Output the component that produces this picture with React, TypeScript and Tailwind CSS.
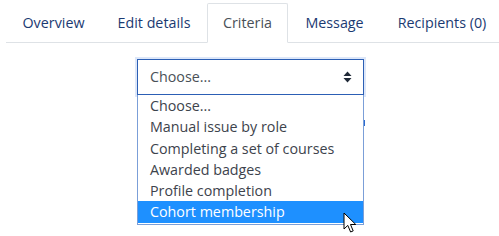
import React from 'react';

const tabs = [
  { label: 'Overview', w: 'w-[95px]' },
  { label: 'Edit details', w: 'w-[106px]' },
  { label: 'Criteria', w: 'w-[81px]', active: true },
  { label: 'Message', w: 'w-[93px]' },
  { label: 'Recipients (0)', w: 'w-[122px]' },
];

const options = [
  'Choose...',
  'Manual issue by role',
  'Completing a set of courses',
  'Awarded badges',
  'Profile completion',
  'Cohort membership',
];

export default function App() {
  return (
    <div className="w-[499px] h-[236px] overflow-hidden bg-white font-['Open_Sans','Noto_Sans',sans-serif] text-[14.3px]">
      {/* Tabs */}
      <div className="pt-[3px] pl-[6px]">
        <ul className="flex border-b border-[#dee2e6] w-[493px]">
          {tabs.map((t) => (
            <li
              key={t.label}
              className={`${t.w} shrink-0 h-[40px] -mb-px flex items-center justify-center border rounded-t-[2px] whitespace-nowrap ${
                t.active
                  ? 'border-[#dee2e6] border-b-white bg-white text-[#495057]'
                  : 'border-transparent text-[#1b3a72]'
              }`}
            >
              {t.label}
            </li>
          ))}
        </ul>
      </div>

      {/* Select with open listbox */}
      <div className="relative pl-[137px] pt-[16px]">
        <div className="w-[227px] h-[36px] border border-[#2c5fb5] shadow-[0_0_0_2px_rgba(120,160,230,0.25)] flex items-center justify-between pl-[12px] pr-[10px] text-[#495057]">
          <span>Choose...</span>
          <svg width="9" height="12" viewBox="0 0 9 12" className="mr-[1px]">
            <path d="M4.5 0.5 L8.5 5 H0.5 Z" fill="#1f2937" />
            <path d="M4.5 11.5 L8.5 7 H0.5 Z" fill="#1f2937" />
          </svg>
        </div>
        <div className="w-[227px] border border-t-0 border-[#7b9fd8] bg-white pb-px">
          {options.map((o, i) => (
            <div
              key={o}
              className={`h-[21.3px] leading-[21px] pl-[12px] whitespace-nowrap ${
                i === options.length - 1 ? 'bg-[#1e90ff] text-white' : 'text-[#3d434c]'
              }`}
            >
              {o}
            </div>
          ))}
        </div>
        {/* bit of blue peeking from behind the list */}
        <div className="absolute left-[364px] top-[77px] w-[1px] h-[6px] bg-[#2c6bd0]" />
        {/* mouse cursor */}
        <svg
          className="absolute left-[343px] top-[169px]"
          width="15"
          height="22"
          viewBox="0 0 15 22"
        >
          <path
            d="M1 1 L1 17 L4.8 13.4 L7.6 20 L10.2 18.9 L7.5 12.5 L12.8 12.5 Z"
            fill="white"
            stroke="black"
            strokeWidth="1"
            strokeLinejoin="miter"
          />
        </svg>
      </div>
    </div>
  );
}
